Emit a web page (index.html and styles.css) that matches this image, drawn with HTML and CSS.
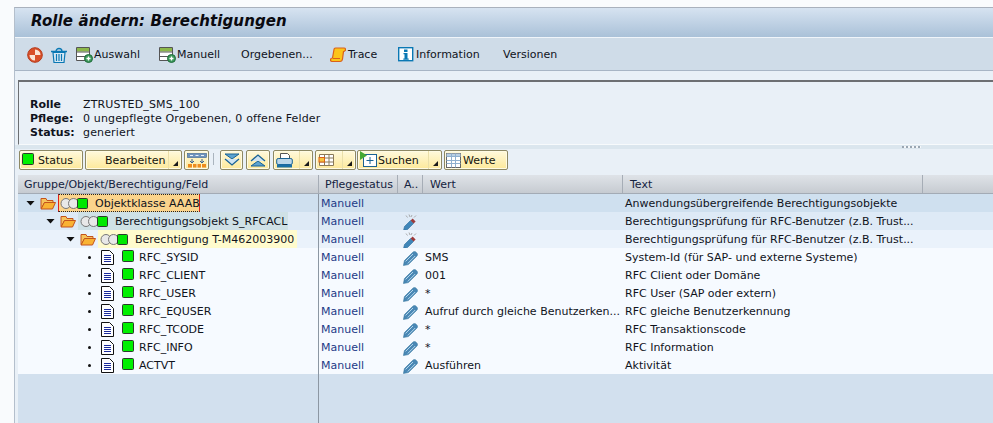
FILE: index.html
```html
<!DOCTYPE html>
<html lang="de">
<head>
<meta charset="utf-8">
<title>Rolle ändern: Berechtigungen</title>
<link rel="stylesheet" href="styles.css">
</head>
<body>
<svg class="defs" width="0" height="0" aria-hidden="true">
  <symbol id="led" viewBox="0 0 12 12"><rect x="0.5" y="0.5" width="11" height="11" rx="1" fill="#00f000" stroke="#2c3a2c"/></symbol>
  <symbol id="lights" viewBox="0 0 28 13"><circle cx="6" cy="6.5" r="5" fill="#e8e8e8" stroke="#777"/><circle cx="13.500" cy="6.500" r="5" fill="#e8e8e8" stroke="#777"/><rect x="17.500" y="1.500" width="10" height="10" rx="1" fill="#00e800" stroke="#2c3a2c"/></symbol>
  <symbol id="folder" viewBox="0 0 16 14"><path d="M1 12.500V2.500h5l1 2h6v2H4.500L1.500 12.500z" fill="#f6c35c" stroke="#c4531c"/><path d="M1 13l3.500-6.500H15.500L12.500 13z" fill="#f9b233" stroke="#c4531c"/></symbol>
  <symbol id="doc" viewBox="0 0 13 15"><path d="M.5 .5h8l4 4v10H.5z" fill="#fff" stroke="#111"/><path d="M3 5.500h7M3 7.500h7M3 9.500h7M3 11.500h7" stroke="#1b2b9c" fill="none"/></symbol>
  <symbol id="pencil" viewBox="0 0 15 15"><path d="M.4 14.600l1-5L9.800 1.200c1-1 2.400-1 3.300 0l.7.7c1 1 1 2.300 0 3.300L5.400 13.600z" fill="#4a88b5" stroke="#2f7099" stroke-width=".5"/><path d="M2.600 10.400l7.400-7.400M4.800 12.400l7.400-7.400" stroke="#b4d6ec" fill="none"/></symbol>
  <symbol id="pencilx" viewBox="0 0 15 17"><path d="M.5 16.500l1-4 6-6 3 3-6 6z" fill="#3f86b8" stroke="#2a6a99" stroke-width=".6"/><path d="M7.600 6.400l2-2 3 3-2 2z" fill="#9c3a3a"/><path d="M3 1.500l1.500 2M6 .5l1 2.500M9 1l-1 2M13 1.500l-2 2" stroke="#999" fill="none" stroke-width=".8"/></symbol>
  <symbol id="addlist" viewBox="0 0 17 16"><path d="M.5 .5h13v13H.5z" fill="#fff" stroke="#555"/><path d="M1 1h12v3.500H1z" fill="#8cb84a"/><path d="M1 5h12.500M1 9.500h12.500" stroke="#555" fill="none"/><circle cx="12.500" cy="11.500" r="4" fill="#3d9a5c" stroke="#1f6b3a"/><path d="M10.500 11.500h4M12.500 9.500v4" stroke="#fff" stroke-width="1.300" fill="none"/></symbol>
</svg>

<main class="app">
  <header class="titlebar"><h1 class="title">Rolle ändern: Berechtigungen</h1></header>

  <nav class="apptools">
    <svg class="ico16" viewBox="0 0 16 16"><circle cx="8" cy="8" r="7.300" fill="#d9502a" stroke="#b53a1a"/><path d="M8 2.500a5.500 5.500 0 0 1 5.500 5.500H8zM8 8v5.500A5.500 5.500 0 0 1 2.500 8z" fill="#fbe6d8"/></svg>
    <svg class="ico16 t-trash" viewBox="0 0 16 16"><path d="M0 4.500h16M5 4.500c0-4 6-4 6 0" stroke="#0a78b4" stroke-width="1.300" fill="none"/><path d="M2 5.500l1 10h10l1-10zM5.500 7v7M8 7v7M10.500 7v7" stroke="#0a78b4" stroke-width="1.200" fill="#d6e8f4"/></svg>
    <svg class="ico-add t-add1"><use href="#addlist"/></svg><span class="tool-label w-ausw">Auswahl</span>
    <svg class="ico-add"><use href="#addlist"/></svg><span class="tool-label w-man">Manuell</span>
    <span class="tool-label w-org">Orgebenen...</span>
    <svg class="ico16 t-gap" viewBox="0 0 16 16"><path d="M4 2.500c0-1 .8-1.500 1.500-1.500H14c1 0 1.500.8 1.500 1.500S15 4.500 13.500 4.500l-1 7.500c-.2 1.500-1 2.500-2.500 2.500H2c-1 0-1.500-.8-1.500-1.500s.7-2 2-2z" fill="#fcc419" stroke="#d9601a" stroke-width="1.200"/><path d="M3 11.500h7" stroke="#d9601a" fill="none"/></svg>
    <span class="tool-label w-trace">Trace</span>
    <svg class="ico16 t-gap" viewBox="0 0 16 16"><rect x=".7" y=".7" width="14" height="13" fill="#fff" stroke="#0a78b4" stroke-width="1.400"/><path d="M6 2.500h3.500v2.500H6zM5.500 6h4v5.500h1.200v1.300H5.300v-1.300h1.200V7.300h-1z" fill="#0a78b4"/></svg>
    <span class="tool-label w-info">Information</span>
    <span class="tool-label">Versionen</span>
  </nav>

  <section class="infobox">
    <div class="info-grid">
      <b>Rolle</b><span>ZTRUSTED_SMS_100</span>
      <b>Pflege:</b><span>0 ungepflegte Orgebenen, 0 offene Felder</span>
      <b>Status:</b><span>generiert</span>
    </div>
  </section>

  <div class="splitter"><span class="grip"></span></div>

  <div class="btnbar">
    <button class="btn b-status"><svg class="led-btn"><use href="#led"/></svg><span class="btxt">Status</span></button>
    <button class="btn b-edit"><span class="btxt">Bearbeiten</span><i class="caret"></i></button>
    <button class="btn b-ic1"><svg viewBox="0 0 20 15" width="20" height="15"><rect x=".5" y=".5" width="19" height="4" fill="#6f93bd" stroke="#365f91" stroke-width=".6"/><path d="M3 2.500h3M8.500 2.500h3M14 2.500h3" stroke="#e8f0f8" fill="none"/><path d="M5 6v3M3 8l2 2 2-2M15 6v3M13 8l2 2 2-2" stroke="#365f91" fill="none"/><rect x="1" y="11" width="18" height="3.500" fill="#ee8c1e"/><path d="M5.500 11v4M10 11v4M14.500 11v4" stroke="#fff4c8" fill="none"/></svg></button>
    <span class="sep"></span>
    <button class="btn b-down"><svg viewBox="0 0 16 14" width="16" height="14"><path d="M1 1h14l-7 5z" fill="#5da3d0" stroke="#1a6394"/><path d="M1 6l7 6 7-6" fill="#cfe4f2" stroke="#1a6394" stroke-width="1.300"/></svg></button>
    <button class="btn b-up"><svg viewBox="0 0 16 14" width="16" height="14"><path d="M1 13h14l-7-5z" fill="#5da3d0" stroke="#1a6394"/><path d="M1 8l7-6 7 6" fill="#cfe4f2" stroke="#1a6394" stroke-width="1.300"/></svg></button>
    <button class="btn b-print"><svg viewBox="0 0 17 15" width="17" height="15"><path d="M4.500.5h7l2 2v4h-9z" fill="#fff" stroke="#555"/><rect x=".7" y="5.500" width="15.600" height="6" rx="1.500" fill="#bcd6e8" stroke="#1a6394"/><rect x="1" y="11.500" width="15" height="3" fill="#1a6fa5"/></svg><i class="caret"></i></button>
    <button class="btn b-layout"><svg viewBox="0 0 17 14" width="17" height="14"><path d="M1.500 1.500h14v11h-14zM6.500 1.500v11M11 1.500v11M1.500 5h14M1.500 9h14" fill="#fff" stroke="#8a7a5a"/><rect x="1" y="4.500" width="5.500" height="4.500" fill="#f5c542" stroke="#d9601a"/></svg><i class="caret"></i></button>
    <button class="btn b-search"><svg class="ic-search" viewBox="0 0 19 18" width="19" height="18"><rect x="4.500" y="3.500" width="13" height="12" fill="#fff" stroke="#1a6394"/><path d="M11 6v7M7.500 9.500h7" stroke="#1a6394" fill="none"/><path d="M1 0l7 4.500L1 9z" fill="#46a832"/></svg><span class="btxt">Suchen</span><i class="caret"></i></button>
    <button class="btn b-vals"><svg viewBox="0 0 15 15" width="15" height="15"><rect x=".5" y=".5" width="14" height="14" fill="#fff" stroke="#666"/><path d="M.5 .5h14v3H.5z" fill="#b8cfe4"/><path d="M5.500 .5v14M9.500 .5v14M.5 3.500h14M.5 7.500h14M.5 10.500h14" stroke="#8fb0cf" fill="none"/></svg><span class="btxt">Werte</span></button>
  </div>

  <section class="tree">
    <div class="thead">
      <span class="th">Gruppe/Objekt/Berechtigung/Feld</span>
      <span class="th">Pflegestatus</span>
      <span class="th">A..</span>
      <span class="th th-w">Wert</span>
      <span class="th th-w">Text</span>
      <span class="th th-last"></span>
    </div>

    <div class="row r0">
      <div class="c-tree lv0"><i class="arrow"></i><svg class="folder"><use href="#folder"/></svg><span class="label l-sel"><svg class="lights"><use href="#lights"/></svg><span class="ntxt">Objektklasse AAAB</span></span></div>
      <div class="c-st">Manuell</div><div class="c-ic"></div><div class="c-val"></div><div class="c-txt">Anwendungsübergreifende Berechtigungsobjekte</div>
    </div>
    <div class="row r1">
      <div class="c-tree lv1"><i class="arrow"></i><svg class="folder"><use href="#folder"/></svg><span class="label l-obj"><svg class="lights"><use href="#lights"/></svg><span class="ntxt">Berechtigungsobjekt S_RFCACL</span></span></div>
      <div class="c-st">Manuell</div><div class="c-ic"><svg class="pencil-x"><use href="#pencilx"/></svg></div><div class="c-val"></div><div class="c-txt">Berechtigungsprüfung für RFC-Benutzer (z.B. Trust...</div>
    </div>
    <div class="row r2">
      <div class="c-tree lv2"><i class="arrow"></i><svg class="folder"><use href="#folder"/></svg><span class="label l-auth"><svg class="lights"><use href="#lights"/></svg><span class="ntxt">Berechtigung T-M462003900</span></span></div>
      <div class="c-st">Manuell</div><div class="c-ic"><svg class="pencil-x"><use href="#pencilx"/></svg></div><div class="c-val"></div><div class="c-txt">Berechtigungsprüfung für RFC-Benutzer (z.B. Trust...</div>
    </div>
    <div class="row">
      <div class="c-tree lv3"><i class="dot"></i><svg class="doc"><use href="#doc"/></svg><svg class="led"><use href="#led"/></svg><span class="ntxt">RFC_SYSID</span></div>
      <div class="c-st">Manuell</div><div class="c-ic"><svg class="pencil"><use href="#pencil"/></svg></div><div class="c-val">SMS</div><div class="c-txt">System-Id (für SAP- und externe Systeme)</div>
    </div>
    <div class="row">
      <div class="c-tree lv3"><i class="dot"></i><svg class="doc"><use href="#doc"/></svg><svg class="led"><use href="#led"/></svg><span class="ntxt">RFC_CLIENT</span></div>
      <div class="c-st">Manuell</div><div class="c-ic"><svg class="pencil"><use href="#pencil"/></svg></div><div class="c-val">001</div><div class="c-txt">RFC Client oder Domäne</div>
    </div>
    <div class="row">
      <div class="c-tree lv3"><i class="dot"></i><svg class="doc"><use href="#doc"/></svg><svg class="led"><use href="#led"/></svg><span class="ntxt">RFC_USER</span></div>
      <div class="c-st">Manuell</div><div class="c-ic"><svg class="pencil"><use href="#pencil"/></svg></div><div class="c-val">*</div><div class="c-txt">RFC User (SAP oder extern)</div>
    </div>
    <div class="row">
      <div class="c-tree lv3"><i class="dot"></i><svg class="doc"><use href="#doc"/></svg><svg class="led"><use href="#led"/></svg><span class="ntxt">RFC_EQUSER</span></div>
      <div class="c-st">Manuell</div><div class="c-ic"><svg class="pencil"><use href="#pencil"/></svg></div><div class="c-val">Aufruf durch gleiche Benutzerken...</div><div class="c-txt">RFC gleiche Benutzerkennung</div>
    </div>
    <div class="row">
      <div class="c-tree lv3"><i class="dot"></i><svg class="doc"><use href="#doc"/></svg><svg class="led"><use href="#led"/></svg><span class="ntxt">RFC_TCODE</span></div>
      <div class="c-st">Manuell</div><div class="c-ic"><svg class="pencil"><use href="#pencil"/></svg></div><div class="c-val">*</div><div class="c-txt">RFC Transaktionscode</div>
    </div>
    <div class="row">
      <div class="c-tree lv3"><i class="dot"></i><svg class="doc"><use href="#doc"/></svg><svg class="led"><use href="#led"/></svg><span class="ntxt">RFC_INFO</span></div>
      <div class="c-st">Manuell</div><div class="c-ic"><svg class="pencil"><use href="#pencil"/></svg></div><div class="c-val">*</div><div class="c-txt">RFC Information</div>
    </div>
    <div class="row">
      <div class="c-tree lv3"><i class="dot"></i><svg class="doc"><use href="#doc"/></svg><svg class="led"><use href="#led"/></svg><span class="ntxt">ACTVT</span></div>
      <div class="c-st">Manuell</div><div class="c-ic"><svg class="pencil"><use href="#pencil"/></svg></div><div class="c-val">Ausführen</div><div class="c-txt">Aktivität</div>
    </div>
    <div class="tree-empty"><div class="empty-left"></div></div>
  </section>
</main>
</body>
</html>
```

FILE: styles.css
```css
* { box-sizing: border-box; }
html, body { height: 100%; }
body {
  margin: 0;
  padding: 7px 0 0 14px;
  background: #f9fbfd;
  overflow: hidden;
  font: 11px/14px "DejaVu Sans", sans-serif;
  color: #10131c;
}
.defs { display: block; position: absolute; }
.app {
  height: 416px;
  width: 979px;
  display: flex;
  flex-direction: column;
  background: #e9f0f7;
  border-top: 1px solid #a9b1bd;
  border-left: 1px solid #b4bfcc;
}
.titlebar {
  height: 30px;
  flex: none;
  background: linear-gradient(#d6e3f1, #aac1d8);
  border-bottom: 1px solid #f0f5fa;
  padding-left: 16px;
}
.title {
  margin: 0;
  font: italic 700 15px/26px "DejaVu Sans", sans-serif;
  letter-spacing: .12px;
  color: #0a0a10;
}
.apptools {
  height: 33px;
  flex: none;
  display: flex;
  align-items: center;
  background: #cfdce8;
  border-bottom: 1px solid #a8b5c5;
  padding: 2px 0 0 12px;
}
.apptools svg { flex: none; margin-right: 2px; }
.ico16 { width: 16px; height: 16px; }
.apptools .ico-add { width: 17px; height: 16px; margin-right: 1px; }
.tool-label { white-space: nowrap; flex: none; }
.t-trash { margin-left: 6px; }
.apptools .t-add1 { margin-left: 7px; }
.w-ausw { width: 65px; }
.w-man { width: 64px; }
.w-org { width: 89px; }
.w-trace { width: 50px; }
.w-info { width: 87px; }

.infobox {
  height: 65px;
  margin: 9px 0 0 3px;
  flex: none;
  border-top: 2px solid #6d6f73;
  border-left: 1px solid #6d6f73;
  border-bottom: 1px solid #f7fafc;
  padding: 16px 0 0 11px;
}
.info-grid {
  display: grid;
  grid-template-columns: 53px 1fr;
  grid-auto-rows: 14px;
}
.info-grid b { font-weight: 700; }
.info-grid span { letter-spacing: .15px; }

.splitter {
  height: 4px;
  flex: none;
  background: #dbe6ee;
  display: flex;
  justify-content: flex-end;
  padding-right: 72px;
}
.grip {
  width: 19px;
  height: 2px;
  margin-top: 1px;
  background: repeating-linear-gradient(90deg, #9aa6b2 0 2px, #f4f7fa 2px 4px);
}

.btnbar {
  height: 20px;
  flex: none;
  margin: 1px 0 0 4px;
  display: flex;
  align-items: stretch;
}
.btn {
  display: flex;
  align-items: center;
  justify-content: flex-start;
  padding: 0 0 0 2px;
  position: relative;
  font: inherit;
  color: #14130c;
  background: linear-gradient(#fff9dc, #fde99a);
  border: 1px solid #8d8864;
  border-radius: 2px;
  box-shadow: inset 0 0 0 1px #fffbe4;
  flex: none;
}
.btxt { padding-top: 2px; }
.caret {
  position: absolute;
  right: 0;
  top: 0;
  bottom: 0;
  width: 13px;
  border-left: 1px solid #eadfaa;
}
.caret::after {
  content: "";
  position: absolute;
  right: 3px;
  bottom: 3px;
  border-style: solid;
  border-width: 0 0 5px 5px;
  border-color: transparent transparent #1a1a1a transparent;
}
.b-status { width: 64px; margin-right: 2px; }
.led-btn { width: 12px; height: 12px; margin: 0 4px 2px 0; }
.b-edit { width: 97px; margin-right: 2px; padding-left: 19px; }
.b-ic1 { width: 25px; }
.sep { width: 1px; height: 12px; margin: 3px 6px 0 4px; background: #aab4be; flex: none; }
.b-down { width: 23px; margin-right: 3px; padding-left: 3px; }
.b-up { width: 24px; margin-right: 3px; padding-left: 3px; }
.b-print { width: 40px; margin-right: 2px; }
.b-layout { width: 41px; margin-right: 1px; }
.b-search { width: 85px; margin-right: 2px; padding-left: 1px; }
.b-vals { width: 64px; padding-left: 1px; }
.b-vals svg { margin-right: 2px; }

.tree {
  flex: 1;
  display: flex;
  flex-direction: column;
  margin: 5px 0 0 3px;
  min-height: 0;
}
.thead, .row {
  display: grid;
  grid-template-columns: 301px 79px 25px 200px 300px 1fr;
  flex: none;
}
.thead {
  height: 19px;
  background: linear-gradient(#dfe3e8, #c6cbd1);
  border-bottom: 1px solid #a3abb5;
}
.th {
  padding: 3px 0 0 6px;
  border-right: 1px solid #a6adb6;
  color: #14233f;
  white-space: nowrap;
  overflow: hidden;
}
.th-w { padding-left: 7px; }
.th-last { border-right: 0; }
.row {
  height: 18px;
  background: #f6faff;
  line-height: 20px;
  white-space: nowrap;
}
.r0 { background: #cfe0ef; }
.r1 { background: #deeaf6; }
.r2 { background: #eaf2fb; }
.c-tree {
  display: flex;
  align-items: center;
  border-right: 1px solid #8c97a3;
  height: 18px;
  line-height: 14px;
}
.ntxt { padding-top: 2px; }
.c-st { padding-left: 2px; color: #1d3b87; }
.c-ic { display: flex; align-items: center; padding-left: 5px; }
.c-val { padding-left: 2px; }
.c-txt { padding-left: 2px; grid-column: 5 / 7; }
.lv0 { padding-left: 8px; }
.lv1 { padding-left: 28px; }
.lv2 { padding-left: 48px; }
.lv3 { padding-left: 70px; }
.arrow {
  width: 9px;
  height: 5px;
  margin-right: 5px;
  background: #111;
  clip-path: polygon(0 0, 100% 0, 50% 100%);
  flex: none;
}
.folder { width: 16px; height: 14px; margin-right: 2px; flex: none; }
.label { display: flex; align-items: center; height: 18px; padding-left: 2px; }
.lights { width: 28px; height: 13px; flex: none; margin-right: 7px; }
.l-sel {
  width: 142px;
  padding-left: 1px;
  background: #fbd48c;
  border-left: 1px solid #e2231a;
  border-right: 1px solid #e2231a;
  border-top: 1px dotted #222;
  border-bottom: 1px dotted #222;
}
.l-obj { width: 210px; background: #cfe1e6; }
.l-auth { width: 199px; background: #fffbcd; }
.dot { width: 3px; height: 3px; border-radius: 50%; background: #111; margin-right: 10px; flex: none; }
.doc { width: 13px; height: 15px; margin-right: 8px; flex: none; }
.led { width: 12px; height: 12px; margin-right: 5px; flex: none; margin-top: -2px; }
.pencil { width: 15px; height: 15px; }
.pencil-x { width: 15px; height: 17px; }
.tree-empty { flex: 1; background: #d2e0ee; display: flex; }
.empty-left { width: 301px; border-right: 1px solid #8c97a3; }
```
